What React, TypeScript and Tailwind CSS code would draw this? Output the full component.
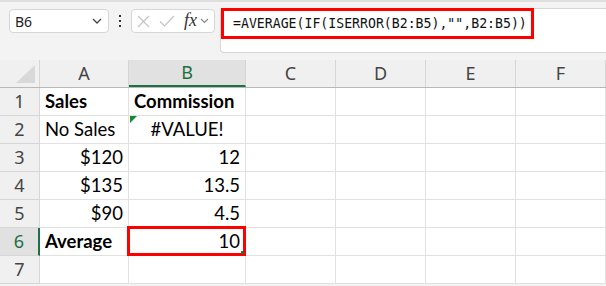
import React from "react";

const cols = ["A", "B", "C", "D", "E", "F"];
const widths = ["w-[89px]", "w-[117px]", "w-[90px]", "w-[90px]", "w-[90px]", "flex-1"];

type Cell = { t?: string; bold?: boolean; align?: "left" | "right" | "center" };
const data: Cell[][] = [
  [{ t: "Sales", bold: true }, { t: "Commission", bold: true }],
  [{ t: "No Sales" }, { t: "#VALUE!", align: "center" }],
  [{ t: "$120", align: "right" }, { t: "12", align: "right" }],
  [{ t: "$135", align: "right" }, { t: "13.5", align: "right" }],
  [{ t: "$90", align: "right" }, { t: "4.5", align: "right" }],
  [{ t: "Average", bold: true }, { t: "10", align: "right" }],
  [],
];

export default function App() {
  return (
    <div className="w-[606px] h-[286px] overflow-hidden bg-[#f3f3f3] font-['Lato',sans-serif]">
      <div className="h-[2px] bg-[#dedede]" />
      {/* toolbar */}
      <div className="flex items-start h-[58px] pt-[7px]">
        <div className="ml-[9px] w-[100px] h-[24px] bg-white border border-[#d6d6d6] rounded-[4px] flex items-center justify-between pl-[5px] pr-[6px]">
          <span className="text-[14px] text-[#222] font-['Noto_Sans',sans-serif]">B6</span>
          <svg width="10" height="6" viewBox="0 0 10 6"><path d="M1 1l4 4 4-4" fill="none" stroke="#444" strokeWidth="1.3" /></svg>
        </div>
        <div className="w-[22px] h-[24px] flex flex-col items-center justify-center gap-[3px]">
          <div className="w-[2px] h-[2px] bg-[#333]" />
          <div className="w-[2px] h-[2px] bg-[#333]" />
          <div className="w-[2px] h-[2px] bg-[#333]" />
        </div>
        <div className="w-[84px] h-[24px] bg-white border border-[#d6d6d6] rounded-[4px] flex items-center pl-[5px] gap-[9px]">
          <svg width="13" height="13" viewBox="0 0 13 13"><path d="M1 1l11 11M12 1L1 12" stroke="#c4c4c4" strokeWidth="1.2" /></svg>
          <svg width="16" height="12" viewBox="0 0 16 12"><path d="M1 6.5l4.5 4.5L15 1" fill="none" stroke="#c4c4c4" strokeWidth="1.2" /></svg>
          <div className="flex items-center gap-[3px]">
            <span className="text-[18px] italic text-[#333] font-['Liberation_Serif',serif] leading-none -mt-[2px]">fx</span>
            <svg width="9" height="6" viewBox="0 0 9 6"><path d="M1 1l3.5 3.5L8 1" fill="none" stroke="#888" strokeWidth="1.1" /></svg>
          </div>
        </div>
        <div className="ml-[5px] flex-1 h-[45px] bg-white border border-[#d6d6d6] border-r-0 rounded-l-[4px] -mt-[1px]">
          <div className="inline-flex items-center h-[31px] -mt-[1px] border-[3px] border-[#ff0000] pl-[9px] pr-[4px] w-[313px]">
            <span className="text-[13.2px] text-[#111] font-['DejaVu_Sans_Mono',monospace] whitespace-nowrap">
              =AVERAGE(IF(ISERROR(B2:B5),"",B2:B5))
            </span>
          </div>
        </div>
      </div>
      {/* grid */}
      <div className="bg-white">
        <div className="flex h-[28px] bg-[#f0f0f0] border-b border-[#b8b8b8]">
          <div className="w-[40px] border-r border-[#d6d6d6] relative">
            <svg className="absolute right-[4px] bottom-[4px]" width="19" height="18" viewBox="0 0 19 18"><path d="M19 0V18H0Z" fill="#d8d8d8" /></svg>
          </div>
          {cols.map((c, i) => (
            <div
              key={c}
              className={`${widths[i]} flex items-center justify-center border-r border-[#d6d6d6] text-[18px] font-['Noto_Sans',sans-serif] ${
                c === "B" ? "bg-[#e1e1e1] text-[#1e6e42] border-b-2 border-b-[#1e7145]" : "text-[#444]"
              }`}
            >
              {c}
            </div>
          ))}
        </div>
        {data.map((row, r) => (
          <div key={r} className="flex h-[28px]">
            <div
              className={`w-[40px] flex items-center justify-center border-b text-[18px] font-['Noto_Sans',sans-serif] ${
                r === 5
                  ? "bg-[#e1e1e1] text-[#1e6e42] border-r-2 border-r-[#1e7145] border-b-[#d6d6d6]"
                  : "bg-[#f0f0f0] text-[#444] border-r border-[#d6d6d6]"
              }`}
            >
              {r + 1}
            </div>
            {cols.map((c, i) => {
              const cell = row[i] || {};
              const al = cell.align === "right" ? "justify-end" : cell.align === "center" ? "justify-center" : "justify-start";
              return (
                <div
                  key={c}
                  className={`${widths[i]} relative flex items-center ${al} px-[5px] pt-[1px] border-r border-b border-[#e1e1e1] text-[18.5px] text-black ${cell.bold ? "font-bold" : ""}`}
                >
                  {r === 1 && i === 1 && (
                    <svg className="absolute left-[1px] top-0" width="7" height="7" viewBox="0 0 7 7"><path d="M0 0H7L0 7Z" fill="#128a2e" /></svg>
                  )}
                  {r === 5 && i === 1 && (
                    <>
                      <div className="absolute left-[-2px] top-[-2px] right-[-1px] bottom-[-1px] border-[3px] border-[#ff0000]" />
                      <div className="absolute right-[1px] bottom-[1px] w-[3px] h-[3px] bg-[#1e7145]" />
                    </>
                  )}
                  <span className="relative whitespace-nowrap">{cell.t}</span>
                </div>
              );
            })}
          </div>
        ))}
      </div>
    </div>
  );
}
